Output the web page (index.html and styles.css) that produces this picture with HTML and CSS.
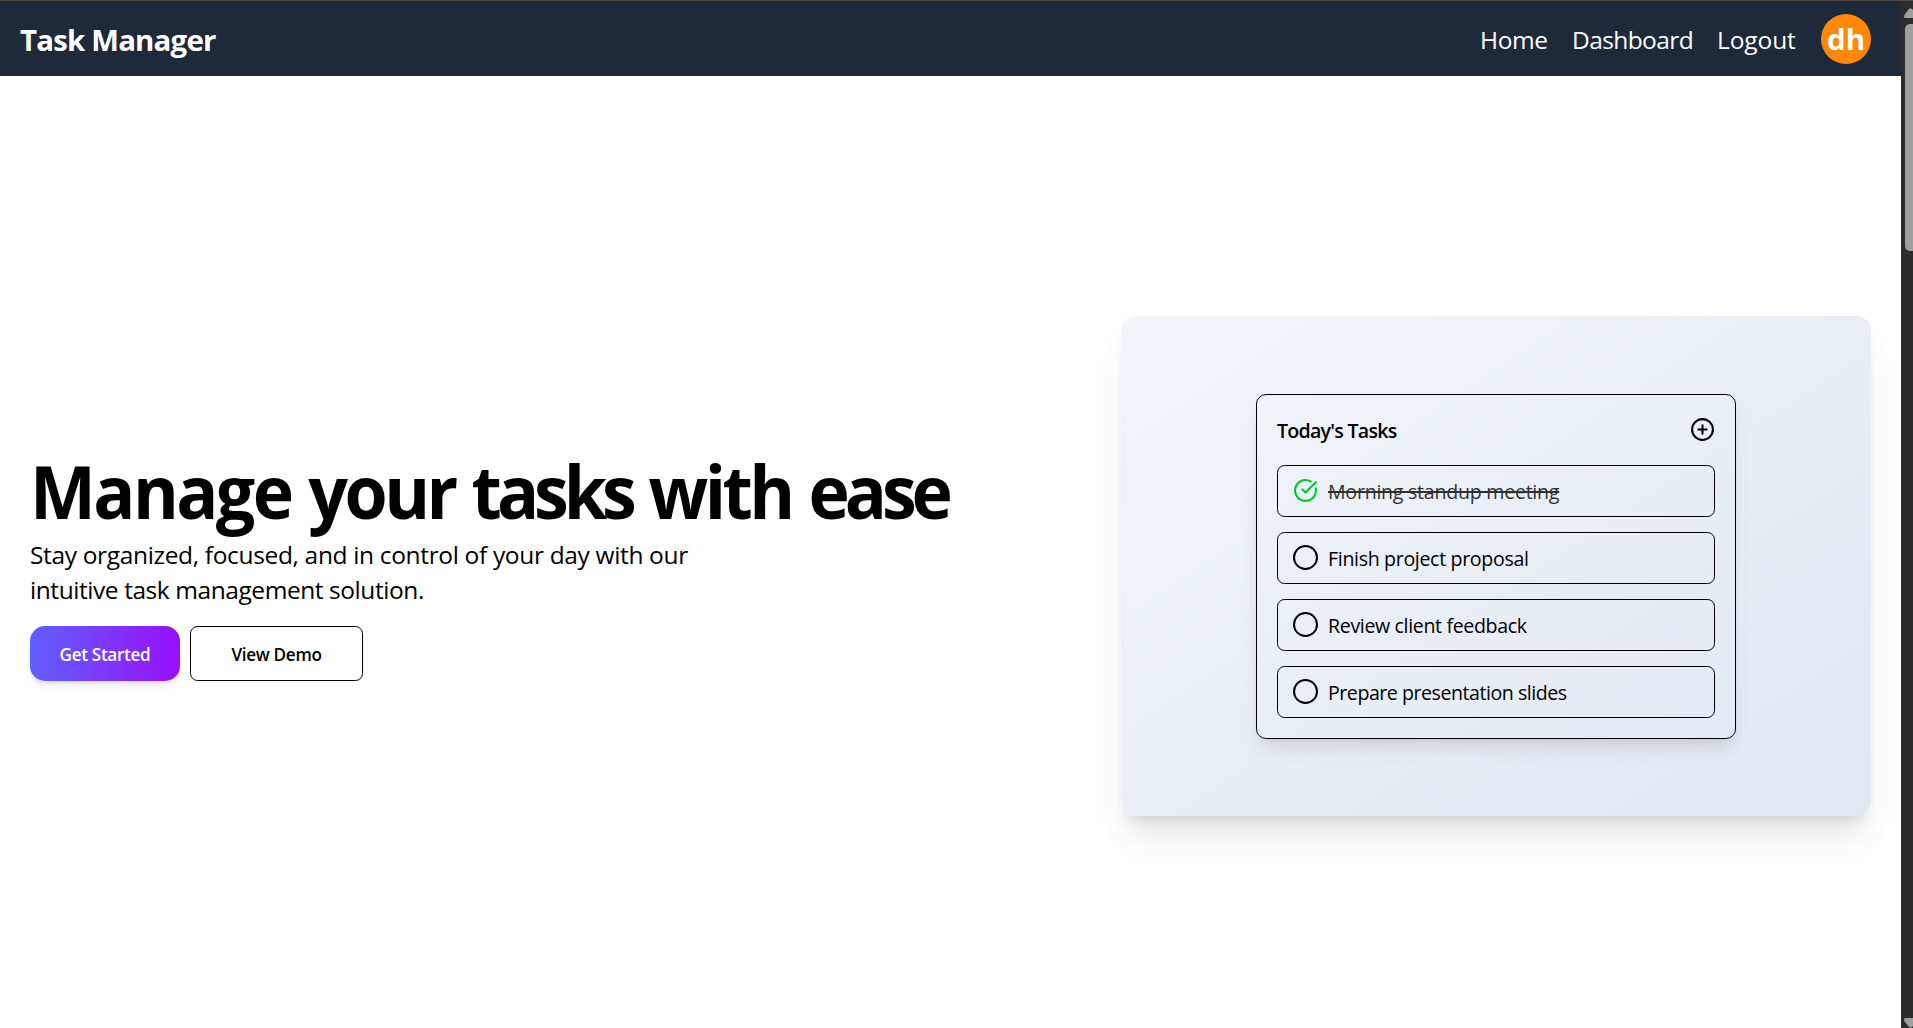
FILE: index.html
```
<!DOCTYPE html>
<html lang="en">
<head>
  <meta charset="utf-8">
  <title>Task Manager</title>
  <link rel="stylesheet" href="styles.css">
</head>
<body>
  <div class="page">
    <header class="navbar">
      <div class="brand">Task Manager</div>
      <nav class="nav">
        <a class="nav-link nav-home">Home</a>
        <a class="nav-link nav-dashboard">Dashboard</a>
        <a class="nav-link nav-logout">Logout</a>
        <div class="avatar">dh</div>
      </nav>
    </header>
    <main class="hero">
      <section class="intro">
        <h1 class="title"><span class="loose">Manage</span> your <span class="tight">tasks</span> with <span class="tight">ease</span></h1>
        <p class="lead"><span>Stay organized, focused, and in control of your day with our</span><br><span class="lead-end">intuitive task management solution.</span></p>
        <div class="actions">
          <button class="btn btn-primary">Get Started</button>
          <button class="btn btn-outline">View Demo</button>
        </div>
      </section>
      <section class="panel">
        <div class="card">
          <div class="card-head">
            <h2 class="card-title">Today's Tasks</h2>
            <svg class="icon" viewBox="0 0 24 24"><circle cx="12" cy="12" r="10"/><path d="M8 12h8M12 8v8"/></svg>
          </div>
          <ul class="tasks">
            <li class="task">
              <svg class="icon icon-done" viewBox="0 0 24 24"><path d="M21.801 10A10 10 0 1 1 17 3.335"/><path d="m9 11 3 3L22 4"/></svg>
              <span class="label done">Morning standup meeting</span>
            </li>
            <li class="task"><span class="ring"></span><span class="label finish">Finish project proposal</span></li>
            <li class="task"><span class="ring"></span><span class="label review">Review client feedback</span></li>
            <li class="task"><span class="ring"></span><span class="label prepare">Prepare presentation slides</span></li>
          </ul>
        </div>
      </section>
    </main>
  </div>
  <aside class="scrollbar">
    <svg class="arrow" viewBox="0 0 9 10"><path d="M0 8.5Q0 7.5 1 6L5 1Q6.500 -.5 8 1L9 2V10H1.500Q0 10 0 8.500Z"/></svg>
    <div class="thumb"></div>
    <svg class="arrow arrow-down" viewBox="0 0 9 10"><path d="M0 1.500Q0 0 1.500 0H9V8L8 9Q6.500 10.500 5 9L1 4Q0 2.500 0 1.500Z"/></svg>
  </aside>
</body>
</html>
```
FILE: styles.css
```
* { box-sizing: border-box; margin: 0; padding: 0; }

body {
  display: flex;
  height: 1028px;
  overflow: hidden;
  background: #fff;
  color: #000;
  font-family: "Open Sans", "Noto Sans", sans-serif;
}

.page { width: 1901px; border-top: 1px solid #574a4d; }

/* Top bar */
.navbar {
  display: flex;
  align-items: center;
  justify-content: space-between;
  height: 75px;
  padding: 0 30px 0 20px;
  background: #1e2939;
  color: #fff;
}
.brand { padding-top: 2px; font-size: 29.4px; font-weight: 700; line-height: 40px; letter-spacing: -.8px; }
.nav { display: flex; align-items: center; }
.nav-link { padding-top: 2px; font-size: 24.5px; line-height: 35px; }
.nav-home { width: 92px; letter-spacing: -.4px; }
.nav-dashboard { width: 145px; letter-spacing: -.6px; }
.nav-logout { width: 104px; letter-spacing: -.1px; }
.avatar {
  width: 50px;
  height: 50px;
  border-radius: 50%;
  background: #ff8904;
  font-size: 29.4px;
  font-weight: 700;
  line-height: 51px;
  text-align: center;
}

/* Hero */
.hero {
  display: flex;
  align-items: center;
  justify-content: space-between;
  padding: 240px 30px 0;
}
.intro { width: 930px; padding-top: 2px; }
.title {
  font-size: 73.5px;
  font-weight: 700;
  line-height: 75px;
  letter-spacing: -3.75px;
  word-spacing: 2.5px;
  white-space: nowrap;
  transform: scaleX(.95);
  transform-origin: left;
}
.loose { letter-spacing: -2.7px; }
.tight { letter-spacing: -5.3px; }
.lead { margin-top: 9px; font-size: 24.5px; line-height: 35px; letter-spacing: -.34px; }
.lead-end { letter-spacing: -.43px; }
.actions { display: flex; gap: 10px; margin-top: 19px; }
.btn {
  height: 55px;
  padding-top: 2px;
  border: 0;
  font-family: inherit;
  font-size: 17.15px;
  font-weight: 600;
  letter-spacing: -.32px;
}
.btn-primary {
  width: 150px;
  border-radius: 15px;
  background: linear-gradient(to right, #615fff, #9810fa);
  box-shadow: 0 5px 7.5px -1px rgba(0, 0, 0, .1), 0 2.5px 5px -2.5px rgba(0, 0, 0, .1);
  color: #fff;
}
.btn-outline { width: 173px; border: 1px solid #000; border-radius: 7.5px; background: #fff; color: #000; }

/* Task preview */
.panel {
  display: flex;
  align-items: center;
  justify-content: center;
  width: 750px;
  height: 500px;
  border-radius: 15px;
  background: linear-gradient(to bottom right, #f1f5f9, #e2e8f0);
  box-shadow: 0 25px 31px -6px rgba(0, 0, 0, .1), 0 10px 12.5px -7.5px rgba(0, 0, 0, .1);
}
.card {
  width: 480px;
  padding: 20px;
  border: 1px solid #000;
  border-radius: 10px;
  box-shadow: 0 12.5px 19px -4px rgba(0, 0, 0, .1), 0 5px 7.5px -5px rgba(0, 0, 0, .1);
}
.card-head { display: flex; align-items: center; justify-content: space-between; height: 30px; margin-bottom: 20px; }
.card-title { padding-top: 2px; font-size: 19.6px; font-weight: 600; line-height: 28px; letter-spacing: -.75px; }
.icon { width: 25px; height: 25px; fill: none; stroke: #000; stroke-width: 2; stroke-linecap: round; stroke-linejoin: round; }
.icon-done { stroke: #00c92e; }
.tasks { display: grid; gap: 15px; list-style: none; }
.task { display: flex; align-items: center; gap: 10px; height: 52px; padding: 0 15px; border: 1px solid #000; border-radius: 7.5px; }
.ring { width: 25px; height: 25px; border: 2px solid #000; border-radius: 50%; }
.label { padding-top: 2px; font-size: 19.6px; line-height: 30px; }
.done { letter-spacing: -.26px; text-decoration: line-through 2px; opacity: .8; }
.finish { letter-spacing: -.34px; }
.review { letter-spacing: -.36px; }
.prepare { letter-spacing: -.47px; }

/* Window scrollbar */
.scrollbar {
  display: flex;
  flex-direction: column;
  align-items: flex-end;
  width: 12px;
  padding-top: 7px;
  border-top: 1px solid #574a4d;
  background: #2c2c2c;
}
.thumb { width: 8px; height: 227px; margin-top: 6px; border-radius: 5px 0 0 5px; background: #9f9f9f; }
.arrow { width: 9px; height: 10px; fill: #9f9f9f; }
.arrow-down { margin-top: auto; }
```
